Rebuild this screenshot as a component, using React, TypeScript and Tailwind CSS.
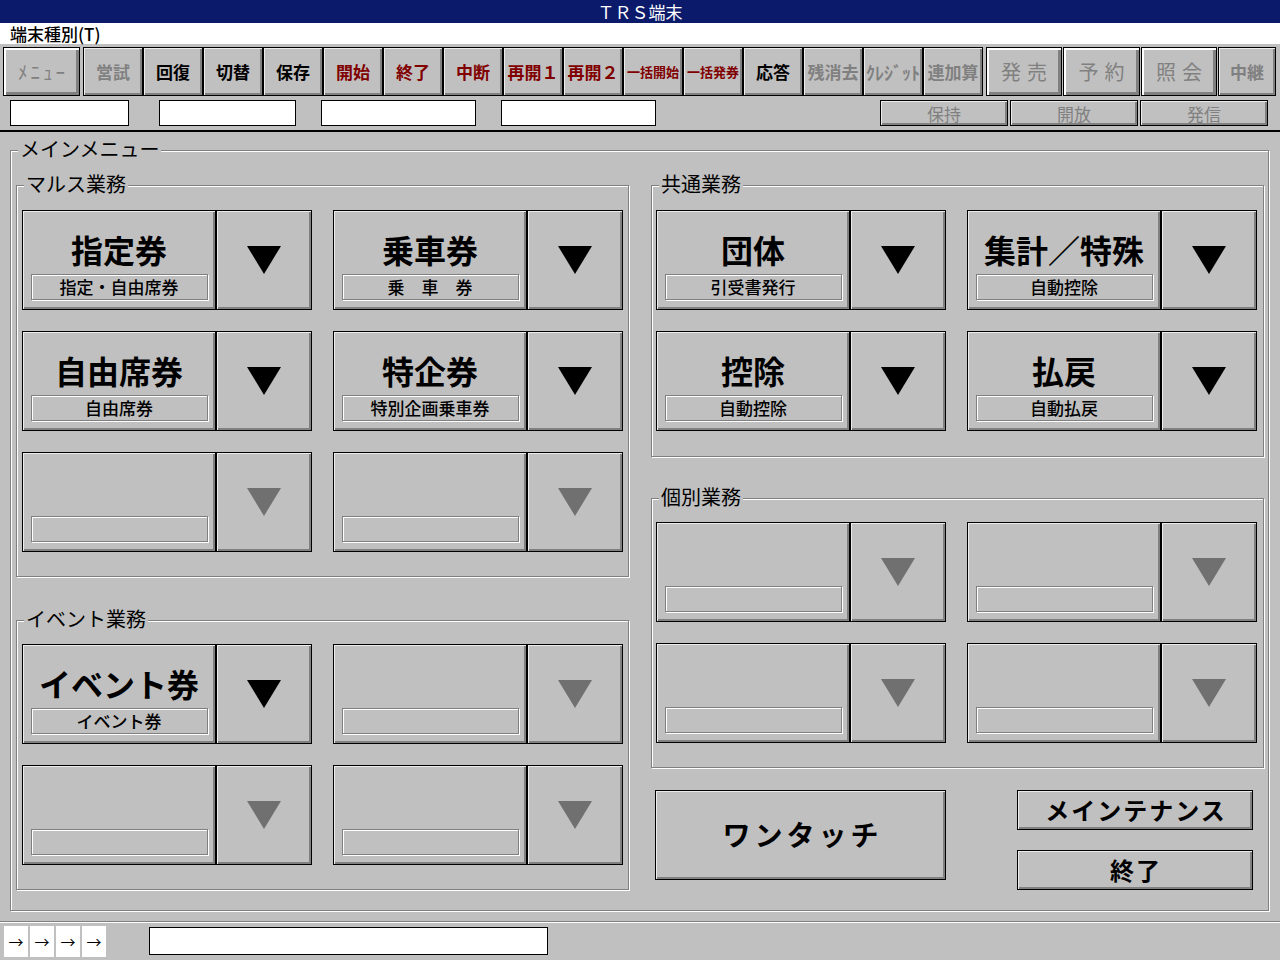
import React from "react";

const BEVEL =
  "border border-black shadow-[inset_1px_1px_0_#ececec,inset_-2px_-2px_0_#808080]";
const BEVEL_THICK =
  "border border-black shadow-[inset_2px_2px_0_#ffffff,inset_-3px_-3px_0_#808080]";
const ETCH =
  "border border-[#808080] shadow-[inset_1px_1px_0_#ffffff,1px_1px_0_#ffffff]";

type TB = { label: string; cls: string; w?: string; bevel?: string };

const toolbar: TB[] = [
  { label: "営試", cls: "text-[#808080] text-[17px] font-bold" },
  { label: "回復", cls: "text-black text-[17px] font-bold" },
  { label: "切替", cls: "text-black text-[17px] font-bold" },
  { label: "保存", cls: "text-black text-[17px] font-bold" },
  { label: "開始", cls: "text-[#800000] text-[17px] font-bold" },
  { label: "終了", cls: "text-[#800000] text-[17px] font-bold" },
  { label: "中断", cls: "text-[#800000] text-[17px] font-bold" },
  { label: "再開１", cls: "text-[#800000] text-[17px] font-bold" },
  { label: "再開２", cls: "text-[#800000] text-[17px] font-bold" },
  { label: "一括開始", cls: "text-[#800000] text-[13px] font-bold" },
  { label: "一括発券", cls: "text-[#800000] text-[13px] font-bold" },
  { label: "応答", cls: "text-black text-[17px] font-bold" },
  { label: "残消去", cls: "text-[#808080] text-[17px] font-bold" },
  { label: "ｸﾚｼﾞｯﾄ", cls: "text-[#808080] text-[18px] font-bold" },
  { label: "連加算", cls: "text-[#808080] text-[17px] font-bold" },
];

function ToolBtn({ label, cls, w = "w-[60px]", bevel = BEVEL }: TB) {
  return (
    <div
      className={`${w} ${bevel} h-[49px] shrink-0 flex items-center justify-center bg-[#c0c0c0] leading-none whitespace-nowrap ${cls}`}
    >
      {label}
    </div>
  );
}

function Triangle({ active }: { active: boolean }) {
  return (
    <svg width="34" height="28" viewBox="0 0 34 28">
      <polygon points="0,0 34,0 17,28" fill={active ? "#000000" : "#707070"} />
    </svg>
  );
}

type Card = { title?: string; sub?: string };

function MenuCard({ title, sub }: Card) {
  const active = !!title;
  return (
    <div className="flex w-[290px] h-[100px]">
      <div className={`w-[194px] h-[100px] ${BEVEL} flex flex-col items-center pt-[23px]`}>
        <div className="h-[32px] text-[32px] leading-[32px] font-bold whitespace-nowrap -mt-[1px] mb-[1px]">
          {title ?? ""}
        </div>
        <div
          className={`mt-[8px] w-[177px] h-[26px] ${ETCH} text-[17px] leading-[23px] font-medium text-center whitespace-nowrap`}
        >
          {sub ?? ""}
        </div>
      </div>
      <div className={`w-[96px] h-[100px] ${BEVEL} flex items-center justify-center`}>
        <Triangle active={active} />
      </div>
    </div>
  );
}

function Group({
  label,
  cards,
  pt,
  pb,
  pl,
}: {
  label: string;
  cards: Card[];
  pt: string;
  pb: string;
  pl: string;
}) {
  return (
    <div className={`relative w-[613px] ${ETCH} ${pt} ${pb} ${pl}`}>
      <div className="absolute -top-[14px] left-[7px] px-[2px] bg-[#c0c0c0] text-[20px] leading-[24px] font-normal">
        {label}
      </div>
      <div className="grid grid-cols-[290px_290px] gap-x-[21px] gap-y-[21px]">
        {cards.map((c, i) => (
          <MenuCard key={i} {...c} />
        ))}
      </div>
    </div>
  );
}

export default function App() {
  return (
    <div className="w-[1280px] h-[960px] bg-[#c0c0c0] flex flex-col overflow-hidden text-black font-['Noto_Sans_CJK_JP','Noto_Sans',sans-serif]">
      {/* title bar */}
      <div className="h-[23px] bg-[#0c1a6b] text-white text-[17px] leading-[23px] text-center">
        ＴＲＳ端末
      </div>
      {/* terminal type */}
      <div className="h-[21px] bg-white text-[17px] leading-[21px] pl-[10px] font-medium">
        端末種別(T)
      </div>
      {/* toolbar */}
      <div className="h-[53px] flex items-start pt-[3px] pl-[3px]">
        <ToolBtn
          label="ﾒﾆｭｰ"
          cls="text-[#808080] text-[19px] font-normal tracking-[3px] pl-[3px]"
          w="w-[77px]"
          bevel={BEVEL_THICK}
        />
        <div className="w-[3px] shrink-0" />
        {toolbar.map((b) => (
          <ToolBtn key={b.label} {...b} />
        ))}
        <div className="w-[3px] shrink-0" />
        <ToolBtn label="発売" cls="text-[#808080] text-[20px] tracking-[6px] pl-[6px]" w="w-[76px]" bevel={BEVEL_THICK} />
        <div className="w-[1px] shrink-0" />
        <ToolBtn label="予約" cls="text-[#808080] text-[20px] tracking-[6px] pl-[6px]" w="w-[77px]" bevel={BEVEL_THICK} />
        <div className="w-[1px] shrink-0" />
        <ToolBtn label="照会" cls="text-[#808080] text-[20px] tracking-[6px] pl-[6px]" w="w-[76px]" bevel={BEVEL_THICK} />
        <div className="w-[1px] shrink-0" />
        <ToolBtn label="中継" cls="text-[#808080] text-[17px] font-bold" w="w-[58px]" />
      </div>
      {/* second row */}
      <div className="h-[33px] flex items-start pt-[3px]">
        <div className="ml-[10px] w-[119px] h-[26px] bg-white border border-black" />
        <div className="ml-[30px] w-[137px] h-[26px] bg-white border border-black" />
        <div className="ml-[25px] w-[155px] h-[26px] bg-white border border-black" />
        <div className="ml-[25px] w-[155px] h-[26px] bg-white border border-black" />
        <div className="ml-auto mr-[12px] flex gap-[2px]">
          {["保持", "開放", "発信"].map((t) => (
            <div
              key={t}
              className={`w-[128px] h-[26px] ${BEVEL} flex items-center justify-center text-[17px] leading-none text-[#808080]`}
            >
              {t}
            </div>
          ))}
        </div>
      </div>
      <div className="h-[2px] bg-black" />
      {/* main */}
      <div className="h-[789px] pt-[18px] pb-[10px] pl-[10px] pr-[11px]">
        <div className={`relative h-full ${ETCH} pl-[5px] pr-[4px] pt-[34px] flex gap-[22px]`}>
          <div className="absolute -top-[14px] left-[7px] px-[2px] bg-[#c0c0c0] text-[20px] leading-[24px]">
            メインメニュー
          </div>
          {/* left column */}
          <div className="flex flex-col gap-[43px]">
            <Group
              label="マルス業務"
              pt="pt-[24px]"
              pb="pb-[24px]"
              pl="pl-[5px]"
              cards={[
                { title: "指定券", sub: "指定・自由席券" },
                { title: "乗車券", sub: "乗　車　券" },
                { title: "自由席券", sub: "自由席券" },
                { title: "特企券", sub: "特別企画乗車券" },
                {},
                {},
              ]}
            />
            <Group
              label="イベント業務"
              pt="pt-[23px]"
              pb="pb-[24px]"
              pl="pl-[5px]"
              cards={[{ title: "イベント券", sub: "イベント券" }, {}, {}, {}]}
            />
          </div>
          {/* right column */}
          <div className="flex flex-col">
            <Group
              label="共通業務"
              pt="pt-[24px]"
              pb="pb-[25px]"
              pl="pl-[4px]"
              cards={[
                { title: "団体", sub: "引受書発行" },
                { title: "集計／特殊", sub: "自動控除" },
                { title: "控除", sub: "自動控除" },
                { title: "払戻", sub: "自動払戻" },
              ]}
            />
            <div className="h-[41px]" />
            <Group
              label="個別業務"
              pt="pt-[23px]"
              pb="pb-[24px]"
              pl="pl-[4px]"
              cards={[{}, {}, {}, {}]}
            />
            <div className="mt-[22px] flex">
              <div
                className={`ml-[4px] w-[291px] h-[90px] ${BEVEL} flex items-center justify-center text-[28px] font-bold tracking-[4px] pl-[4px] pb-[2px]`}
              >
                ワンタッチ
              </div>
              <div className="ml-[71px] flex flex-col gap-[20px]">
                <div
                  className={`w-[236px] h-[40px] ${BEVEL} flex items-center justify-center text-[24px] font-bold tracking-[2px] pl-[2px] leading-none`}
                >
                  メインテナンス
                </div>
                <div
                  className={`w-[236px] h-[40px] ${BEVEL} flex items-center justify-center text-[24px] font-bold tracking-[2px] pl-[2px] leading-none`}
                >
                  終了
                </div>
              </div>
            </div>
          </div>
        </div>
      </div>
      {/* status bar */}
      <div className="h-[39px] border-t border-[#808080] shadow-[inset_0_1px_0_#ffffff] flex items-start pt-[4px] pl-[4px]">
        <div className="flex gap-[2px]">
          {[0, 1, 2, 3].map((i) => (
            <div
              key={i}
              className="w-[24px] h-[31px] bg-white flex items-center justify-center text-[15px] leading-none"
            >
              →
            </div>
          ))}
        </div>
        <div className="ml-[43px] mt-[1px] w-[399px] h-[28px] bg-white border border-black" />
      </div>
    </div>
  );
}
